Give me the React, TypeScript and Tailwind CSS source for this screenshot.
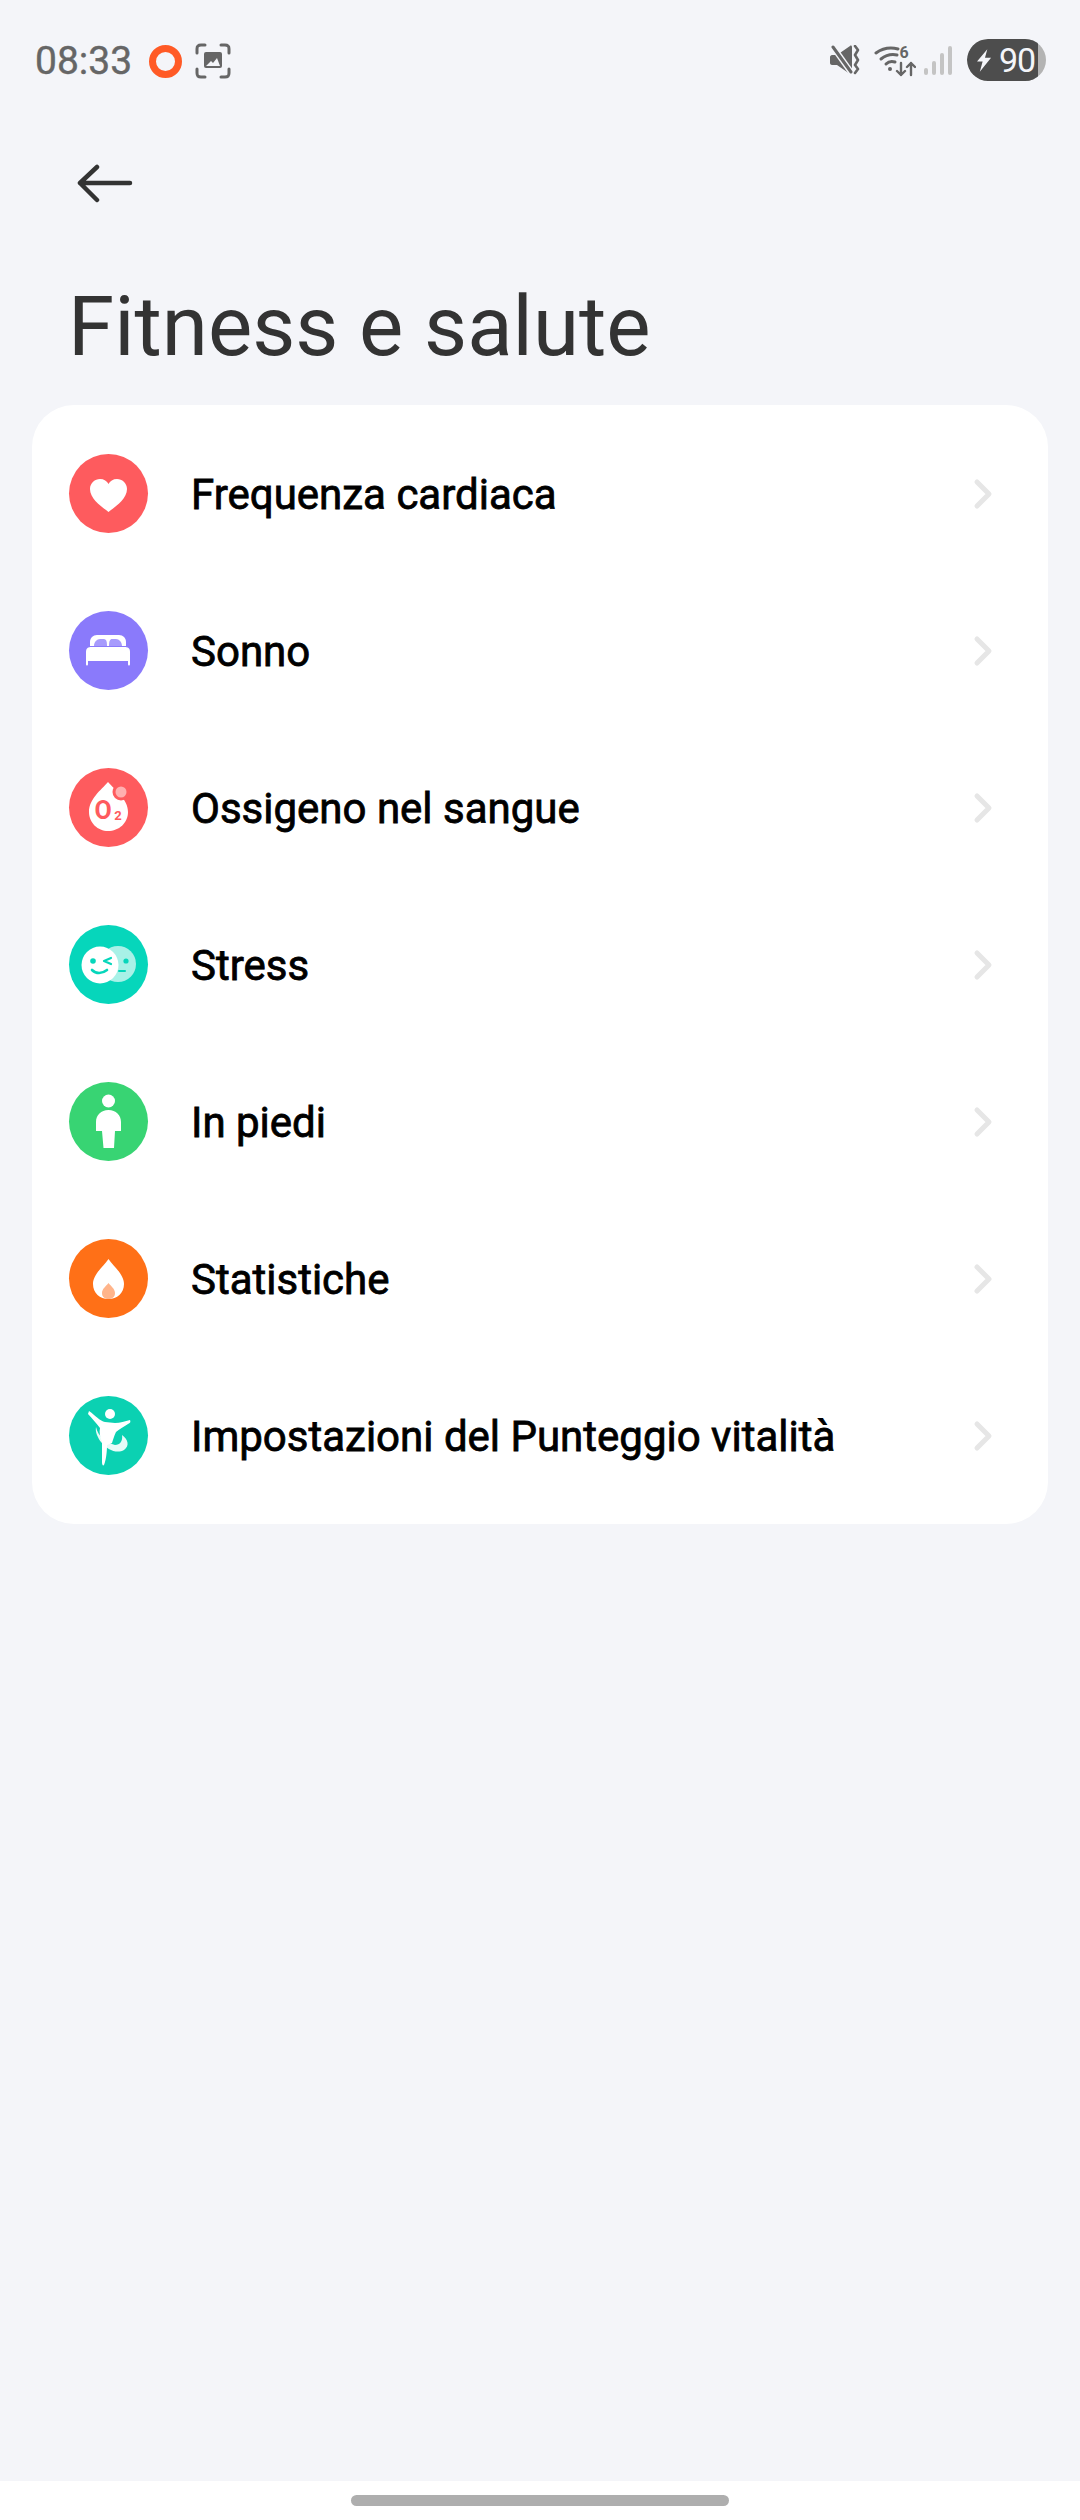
import { ChevronRight } from "lucide-react";
import type { ReactNode } from "react";

function Disc({ color, children }: { color: string; children: ReactNode }) {
  return (
    <div className={`flex h-[79px] w-[79px] shrink-0 items-center justify-center rounded-full ${color}`}>
      <svg viewBox="0 0 79 79" className="h-[79px] w-[79px]">
        {children}
      </svg>
    </div>
  );
}

const rows: { label: string; color: string; icon: ReactNode }[] = [
  {
    label: "Frequenza cardiaca",
    color: "bg-[#fe5b5e]",
    icon: <path d="M39.5 58 C33 53 21 45 21 35 C21 29 26 25 31 25 C35 25 38 27 39.5 30 C41 27 44 25 48 25 C53 25 58 29 58 35 C58 45 46 53 39.5 58 Z" fill="#fff" />,
  },
  {
    label: "Sonno",
    color: "bg-[#8a7afb]",
    icon: (
      <>
        <path d="M21 31 C21 27 24 24 28 24 L50 24 C54 24 57 27 57 31 L57 35 L21 35 Z" fill="#fff" />
        <path d="M25 35 C25 31 28 28 31 28 L35 28 C37 28 38 30 38 34 L38 35 Z M40 35 C40 30 41 28 43 28 L47 28 C50 28 53 31 53 35 Z" fill="#8a7afb" opacity="0.75" />
        <path d="M17 41 C17 37 19 36 23 36 L55 36 C59 36 61 37 61 41 L61 53 C61 55 59 55 59 53 L59 50 L19 50 L19 53 C19 55 17 55 17 53 Z" fill="#fff" />
      </>
    ),
  },
  {
    label: "Ossigeno nel sangue",
    color: "bg-[#fe5b5e]",
    icon: (
      <>
        <path d="M39 14 C32 22 20 31 20 44 C20 55 29 63 39 63 C50 63 59 55 59 44 C59 31 46 22 39 14 Z" fill="#fff" />
        <circle cx="52" cy="24" r="8.5" fill="#fe5b5e" />
        <circle cx="52" cy="24" r="5.5" fill="#ffb0b0" />
        <text x="34" y="51" textAnchor="middle" fontSize="25" fontWeight="700" fill="#fe5b5e" className="font-['Roboto',sans-serif]">O</text>
        <text x="49" y="51.5" textAnchor="middle" fontSize="13" fontWeight="700" fill="#fe5b5e" className="font-['Roboto',sans-serif]">2</text>
      </>
    ),
  },
  {
    label: "Stress",
    color: "bg-[#06d6bb]",
    icon: (
      <>
        <circle cx="49" cy="39" r="18" fill="#fff" opacity="0.65" />
        <circle cx="31" cy="40" r="18.5" fill="#fff" />
        <circle cx="57" cy="36" r="2.6" fill="#06d6bb" />
        <path d="M50 46 L56 46" stroke="#06d6bb" strokeWidth="2" strokeLinecap="round" />
        <circle cx="24" cy="36" r="2.8" fill="#06d6bb" />
        <path d="M42 33 L35 36 L42 39" fill="none" stroke="#06d6bb" strokeWidth="2.2" strokeLinecap="round" strokeLinejoin="round" />
        <path d="M23 45 C27 49 33 49 38 45" fill="none" stroke="#06d6bb" strokeWidth="2.6" strokeLinecap="round" />
      </>
    ),
  },
  {
    label: "In piedi",
    color: "bg-[#38d473]",
    icon: (
      <>
        <circle cx="39.5" cy="19" r="6.5" fill="#fff" />
        <path d="M27 49 L27 40 C27 33 32 28 39.5 28 C47 28 52 33 52 40 L52 49 L46 49 L45 66 L34.5 66 L33 49 Z" fill="#fff" />
      </>
    ),
  },
  {
    label: "Statistiche",
    color: "bg-[#ff7017]",
    icon: (
      <>
        <path d="M39.5 20 C35 27 24 35 24 45 C24 54 31 60 39.5 60 C48 60 55 54 55 45 C55 35 44 27 39.5 20 Z" fill="#fff" />
        <path d="M39.5 44 C37 47 33 50 33 54 C33 58 36 60 39.5 60 C43 60 46 58 46 54 C46 50 42 47 39.5 44 Z" fill="#ffb48a" />
      </>
    ),
  },
  {
    label: "Impostazioni del Punteggio vitalità",
    color: "bg-[#0bd1b2]",
    icon: (
      <>
        <circle cx="41" cy="18" r="5" fill="#fff" />
        <path d="M20 15 C27 20 31 25 36 26 L46 27 C51 27 56 25 61 24 C62 26 61 27 59 28 C55 31 50 33 47 36 C45 40 44 44 43 47 L38 49 C38 56 37 64 35 69 C34 70 33 69 33 66 L33 46 C31 41 30 36 31 32 C27 27 23 22 19 18 Z" fill="#fff" />
        <path d="M27 31 C29 41 38 47 46 49 C51 49 54 45 53 39 C59 43 61 50 55 54 C48 58 38 54 32 46 C29 42 26 36 27 31 Z" fill="#fff" opacity="0.9" />
      </>
    ),
  },
];

function StatusBar() {
  return (
    <div className="flex h-[122px] items-center justify-between pl-[35px] pr-[34px]">
      <div className="flex items-center">
        <span className="font-['Roboto',sans-serif] text-[39px] leading-[40px] text-[#666666] [-webkit-text-stroke:0.4px_#666666]">08:33</span>
        <span className="ml-[17px] h-[33px] w-[33px] rounded-full border-[7px] border-[#ff5a26]" />
        <svg viewBox="0 0 36 36" className="ml-[13px] h-9 w-9" fill="none">
          <path d="M2 10 V6 C2 3 3 2 6 2 H10 M26 2 H30 C33 2 34 3 34 6 V10 M34 26 V30 C34 33 33 34 30 34 H26 M10 34 H6 C3 34 2 33 2 30 V26" stroke="#666" strokeWidth="3" strokeLinecap="round" />
          <rect x="9" y="9" width="18" height="16" rx="2" fill="#666" />
          <path d="M11 23 L16 18 L18 20 L22 15 L25 23 Z" fill="#f4f5f9" />
        </svg>
      </div>
      <div className="flex items-center pb-[2px]">
        <svg viewBox="0 0 30 30" className="h-[30px] w-[30px]" fill="none">
          <path d="M0 12 C0 11 1 10 2 10 L7 10 L20 1 C21 0 22 1 22 2 L22 28 C22 29 21 30 20 29 L7 20 L2 20 C1 20 0 19 0 18 Z" fill="#666" />
          <path d="M1 -1 L23 30" stroke="#f4f5f9" strokeWidth="6" />
          <path d="M3 2 L21 27" stroke="#666" strokeWidth="3" strokeLinecap="round" />
          <path d="M25 1 L28 5 L25 10 L28 15 L25 20 L28 24 L25 28" stroke="#666" strokeWidth="2.6" strokeLinecap="round" strokeLinejoin="round" />
        </svg>
        <svg viewBox="0 -4 42 36" className="ml-[14px] h-9 w-[42px]" fill="none">
          <path d="M2 7 C9 2 16 1 24 3" stroke="#666" strokeWidth="3" strokeLinecap="round" />
          <path d="M7 13 C12 9 18 8 23 9" stroke="#666" strokeWidth="3" strokeLinecap="round" />
          <path d="M12 18 C15 15 18 15 21 16" stroke="#666" strokeWidth="3" strokeLinecap="round" />
          <circle cx="16" cy="23" r="2" fill="#666" />
          <text x="30" y="11.5" textAnchor="middle" fontSize="16" fontWeight="700" fill="#666" className="font-['Roboto',sans-serif]">6</text>
          <path d="M27 17 V29 M23 25 L27 29 L31 25 M37 29 V17 M33 21 L37 17 L41 21" stroke="#666" strokeWidth="2.4" strokeLinecap="round" strokeLinejoin="round" />
        </svg>
        <div className="ml-[8px] flex h-[30px] items-end gap-[4px]">
          <span className="h-[7px] w-[4px] rounded-full bg-[#c4c4c4]" />
          <span className="h-[14px] w-[4px] rounded-full bg-[#c4c4c4]" />
          <span className="h-[22px] w-[4px] rounded-full bg-[#c4c4c4]" />
          <span className="h-[29px] w-[4px] rounded-full bg-[#c4c4c4]" />
        </div>
        <div className="relative ml-[15px] flex h-[42px] w-[79px] items-center overflow-hidden rounded-full bg-[#b3b3b3]">
          <div className="flex h-full w-[71px] items-center rounded-l-full bg-[#4d4d4d] pl-[10px]">
            <svg viewBox="0 0 16 24" className="h-[23px] w-[15px] shrink-0">
              <path d="M11 0 L0 13 H6 L3 24 L15 9 H8.5 Z" fill="#f4f5f9" />
            </svg>
            <span className="ml-[7px] font-['Roboto',sans-serif] text-[34px] leading-[42px] tracking-[-1px] text-[#f4f5f9]">90</span>
          </div>
        </div>
      </div>
    </div>
  );
}

export default function App() {
  return (
    <div className="flex h-[2520px] w-[1080px] flex-col overflow-hidden bg-[#f4f5f9] font-['Roboto',sans-serif]">
      <StatusBar />
      <div className="pl-[75px] pt-[42px]">
        <svg viewBox="0 0 58 40" className="h-10 w-[58px]" fill="none">
          <path d="M5 19 H55 M22 3 L5 19 L22 36" stroke="#333" strokeWidth="4.5" strokeLinecap="round" strokeLinejoin="round" />
        </svg>
      </div>
      <h1 className="mt-[74px] pl-[68px] text-[83.5px] font-normal leading-[98px] text-[#333333]">Fitness e salute</h1>
      <div className="mx-[32px] mt-[29px] rounded-[42px] bg-white pb-[10px] pt-[10px]">
        {rows.map((r) => (
          <div key={r.label} className="flex h-[157px] items-center pl-[37px] pr-[41px]">
            <Disc color={r.color}>{r.icon}</Disc>
            <span className="ml-[43px] pt-[2px] text-[42px] font-normal leading-[50px] text-black [-webkit-text-stroke:0.8px_#000000]">{r.label}</span>
            <ChevronRight className="ml-auto h-12 w-12 text-[#e6e6e6]" strokeWidth={2.5} />
          </div>
        ))}
      </div>
      <div className="flex-1" />
      <div className="flex h-[39px] justify-center bg-white pt-[14px]">
        <div className="h-[11px] w-[378px] rounded-full bg-[#aeaeae]" />
      </div>
    </div>
  );
}
